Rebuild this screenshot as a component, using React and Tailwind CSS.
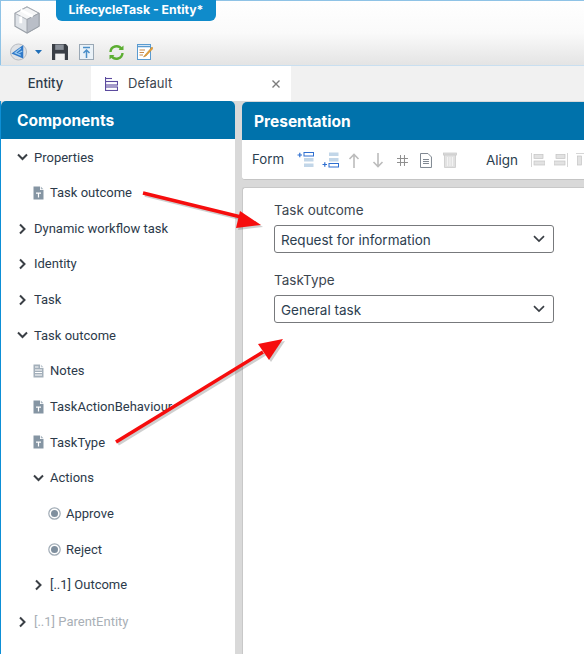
import React from "react";

function Chevron({ open, className = "" }) {
  return (
    <svg width="11" height="12" viewBox="0 0 11 12" fill="none" stroke="#3a3f45" strokeWidth="2" className={`shrink-0 ${className}`}>
      {open ? <path d="M1 3.5 L5.5 8 L10 3.5" /> : <path d="M3 1.5 L7.5 6 L3 10.5" />}
    </svg>
  );
}

function DocT() {
  return (
    <svg width="11" height="14" viewBox="0 0 11 14" className="shrink-0">
      <path d="M0.5 0.5 H7 V4 H10.5 V13.5 H0.5 Z" fill="#8595a3" />
      <path d="M7.8 0.5 L10.5 3.2 H7.8 Z" fill="#a9b5bf" />
      <path d="M3 6.5 H8 V7.7 H6.1 V11.5 H4.9 V7.7 H3 Z" fill="#fff" />
    </svg>
  );
}

function DocLines() {
  return (
    <svg width="11" height="14" viewBox="0 0 11 14" className="shrink-0">
      <path d="M0.5 0.5 H7 V4 H10.5 V13.5 H0.5 Z" fill="#a3afba" />
      <path d="M7.8 0.5 L10.5 3.2 H7.8 Z" fill="#c2cbd3" />
      <path d="M2 3 H5.5 M2 6 H9 M2 8.5 H9 M2 11 H9" stroke="#fff" strokeWidth="1" />
    </svg>
  );
}

function Radio() {
  return (
    <svg width="13" height="13" viewBox="0 0 13 13" className="shrink-0">
      <circle cx="6.5" cy="6.5" r="5.7" fill="#fff" stroke="#a0abb5" strokeWidth="1.2" />
      <circle cx="6.5" cy="6.5" r="3.5" fill="#7f8f9e" />
    </svg>
  );
}

function Row({ indent, icon, children, h = "h-[35.65px]", muted, gap = "gap-[6px]" }) {
  return (
    <div className={`flex items-center ${h} ${indent} ${gap}`}>
      {icon}
      <span
        className={`whitespace-nowrap text-[13px] ${muted ? "text-[#a9afb6]" : "text-[#2c3a4a]"}`}
        style={{ fontFamily: 'Roboto, "Liberation Sans", sans-serif' }}
      >
        {children}
      </span>
    </div>
  );
}

function StackIcon({ plusTop }) {
  return (
    <svg width="17" height="16" viewBox="0 0 17 16">
      {plusTop ? (
        <>
          <path d="M0.5 3 H5 M2.8 0.8 V5.2" stroke="#2f6fd0" strokeWidth="1.2" />
          <rect x="7" y="0.5" width="9.5" height="3.5" fill="#fff" stroke="#2f6fd0" />
          <rect x="7" y="6" width="9.5" height="3.5" fill="#c2d6e8" />
          <rect x="7" y="11.5" width="9.5" height="3.5" fill="#c2d6e8" />
        </>
      ) : (
        <>
          <path d="M0.5 12.5 H5 M2.8 10.3 V14.7" stroke="#2f6fd0" strokeWidth="1.2" />
          <rect x="7" y="0.5" width="9.5" height="3.5" fill="#c2d6e8" />
          <rect x="7" y="6" width="9.5" height="3.5" fill="#c2d6e8" />
          <rect x="7" y="11.5" width="9.5" height="3.5" fill="#fff" stroke="#2f6fd0" />
        </>
      )}
    </svg>
  );
}

function ArrowV({ up }) {
  return (
    <svg width="12" height="15" viewBox="0 0 12 15" fill="none" stroke="#bcbcbc" strokeWidth="1.6">
      {up ? <path d="M6 15 V1.5 M1.5 6 L6 1.5 L10.5 6" /> : <path d="M6 0 V13.5 M1.5 9 L6 13.5 L10.5 9" />}
    </svg>
  );
}

function Select({ label, value }) {
  return (
    <div className="flex flex-col">
      <div className="h-[22px] text-[13.5px] leading-[14px] text-[#3c4650]">{label}</div>
      <div className="flex h-[28px] w-[280px] items-center justify-between rounded-[3px] border border-[#77797c] bg-white pl-[6px] pr-[8px] text-[13.5px] text-[#2c3e50]">
        <span className="pt-[2px]">{value}</span>
        <svg width="12" height="8" viewBox="0 0 12 8" fill="none" stroke="#3a3f45" strokeWidth="1.7">
          <path d="M1 1.2 L6 6 L11 1.2" />
        </svg>
      </div>
    </div>
  );
}

export default function App() {
  return (
    <div
      className="relative h-[654px] w-[584px] overflow-hidden bg-[#d9d9d9]"
      style={{ fontFamily: 'Inter, "Liberation Sans", sans-serif' }}
    >
      {/* Title / ribbon */}
      <div className="h-[65px] border-l border-t border-[#8fc3e6] bg-gradient-to-b from-white via-[#fafafa] to-[#e4e4e4]">
        <div className="flex h-[22px] items-start">
          <div className="ml-[13px] mt-[5px] shrink-0">
            <svg width="26" height="28" viewBox="0 0 27 29">
              <path d="M13.5 1 L26 7.5 V21 L13.5 28 L1 21 V7.5 Z" fill="#dfe3e8" stroke="#9aa0a8" strokeWidth="1.2" />
              <path d="M1 7.5 L13.5 14 L26 7.5 L13.5 1 Z" fill="#f5f6f7" stroke="#a8adb4" />
              <path d="M13.5 14 V28 L26 21 V7.5 Z" fill="#b9bec7" stroke="#9aa0a8" />
              <path d="M7 4.2 L19.5 10.8 M7 10.8 V18" stroke="#fff" strokeWidth="3" fill="none" />
            </svg>
          </div>
          <div className="-mt-px ml-[16px] flex h-[21px] w-[160px] items-center justify-center rounded-b-[6px] bg-[#0f8bcb] text-[12.25px] font-bold text-white">
            LifecycleTask - Entity*
          </div>
        </div>
        <div className="ml-[9px] mt-[20px] flex h-[18px] items-center">
          <svg width="17" height="18" viewBox="0 0 18 18">
            <circle cx="9" cy="9" r="8.5" fill="#dfe2e6" stroke="#b5b9bf" />
            <path d="M14 1.5 V16 L1.5 10.5 Z" fill="#2f79c9" />
            <path d="M11.5 5 L5.5 9.8 L11.5 12.5 M13 8 L9 10" stroke="#9fcdf0" strokeWidth="1.3" fill="none" />
          </svg>
          <svg width="7" height="4" viewBox="0 0 7 4" className="ml-[8px]">
            <path d="M0 0 H7 L3.5 4 Z" fill="#1f6fb8" />
          </svg>
          <svg width="16" height="16" viewBox="0 0 15 15" className="ml-[10px]">
            <path d="M0 0 H13 L15 2 V15 H0 Z" fill="#3a3f46" />
            <rect x="3" y="0.5" width="8" height="5" fill="#8a9099" />
            <rect x="3" y="9" width="9" height="6" fill="#f2f2f2" />
          </svg>
          <svg width="15" height="16" viewBox="0 0 15 16" className="ml-[11px]">
            <rect x="0.5" y="0.5" width="14" height="15" fill="#eaf2f8" stroke="#9aa8b5" />
            <path d="M4 3.5 H11" stroke="#4a8fc9" strokeWidth="1.5" />
            <path d="M7.5 14 V6 M4.5 9 L7.5 6 L10.5 9" stroke="#4a8fc9" strokeWidth="1.5" fill="none" />
          </svg>
          <svg width="15" height="15" viewBox="0 0 15 15" className="ml-[15px]" fill="none">
            <path d="M1.5 7 A6 6 0 0 1 12.5 4" stroke="#5cae32" strokeWidth="2.4" />
            <path d="M13.5 8 A6 6 0 0 1 2.5 11" stroke="#5cae32" strokeWidth="2.4" />
            <path d="M9.5 5 H14.5 V0.5 Z M0.5 14.5 V10 H5.5 Z" fill="#5cae32" />
          </svg>
          <svg width="16" height="16" viewBox="0 0 16 16" className="ml-[13px]">
            <rect x="0.5" y="0.5" width="13" height="15" fill="#fff" stroke="#5a9bd0" />
            <path d="M0.5 2.5 H13.5" stroke="#5a9bd0" strokeWidth="1.5" />
            <path d="M2.5 6 H8 M2.5 8.5 H7 M2.5 11 H6" stroke="#c98a4a" strokeWidth="1" />
            <path d="M15 3 L8 11 L6.5 13 L9 12 L16 4.5 Z" fill="#e8a23a" stroke="#b87a20" strokeWidth="0.5" />
          </svg>
        </div>
      </div>

      {/* Tabs */}
      <div className="flex h-[36px] border-t border-[#c9dff0] bg-[#f1f1f1]">
        <div className="flex w-[91px] items-center justify-center text-[13px] font-medium text-[#2c3a4a]">Entity</div>
        <div className="flex w-[200px] items-center bg-white pl-[14px] pr-[10px]">
          <svg width="13" height="14" viewBox="0 0 13 14" fill="none" stroke="#5b4a9e" strokeWidth="1.1">
            <path d="M0.5 0 V14" />
            <path d="M0.5 1.5 H7" />
            <rect x="0.5" y="4.5" width="12" height="3.5" />
            <rect x="0.5" y="10" width="12" height="3.5" />
          </svg>
          <span className="ml-[10px] text-[13px] text-[#3c4650]">Default</span>
          <svg width="10" height="10" viewBox="0 0 10 10" className="ml-auto" stroke="#7c7c7c" strokeWidth="1.4">
            <path d="M1.5 1.5 L8.5 8.5 M8.5 1.5 L1.5 8.5" />
          </svg>
        </div>
      </div>

      {/* Panels */}
      <div className="flex h-[553px]">
        <div className="ml-px h-full w-[234px] overflow-hidden rounded-t-[5px] bg-white">
          <div className="flex h-[38px] items-center bg-[#0072ab] pl-[16px] pt-[1px] text-[15.5px] font-bold text-white">
            Components
          </div>
          <div className="pt-[0.45px]">
            <Row indent="pl-[16px]" icon={<Chevron open />}>Properties</Row>
            <Row indent="pl-[32px]" icon={<DocT />}>Task outcome</Row>
            <Row indent="pl-[16px]" icon={<Chevron />}>Dynamic workflow task</Row>
            <Row indent="pl-[16px]" icon={<Chevron />}>Identity</Row>
            <Row indent="pl-[16px]" icon={<Chevron />}>Task</Row>
            <Row indent="pl-[16px]" icon={<Chevron open />}>Task outcome</Row>
            <Row indent="pl-[32px]" icon={<DocLines />}>Notes</Row>
            <Row indent="pl-[32px]" icon={<DocT />}>TaskActionBehaviour</Row>
            <Row indent="pl-[32px]" icon={<DocT />}>TaskType</Row>
            <Row indent="pl-[32px]" icon={<Chevron open />}>Actions</Row>
            <Row indent="pl-[47px]" gap="gap-[5px]" icon={<Radio />}>Approve</Row>
            <Row indent="pl-[47px]" gap="gap-[5px]" icon={<Radio />}>Reject</Row>
            <Row indent="pl-[32px]" icon={<Chevron />}>[..1] Outcome</Row>
            <Row indent="pl-[16px]" h="h-[38.5px]" muted icon={<Chevron />}>[..1] ParentEntity</Row>
          </div>
        </div>

        <div className="ml-[7px] flex min-w-0 flex-1 flex-col">
          <div className="mt-px flex h-[38px] items-center rounded-tl-[5px] bg-[#0072ab] pl-[12px] pt-[1px] text-[15.5px] font-bold text-white">
            Presentation
          </div>
          <div className="flex h-[40px] items-center rounded-bl-[3px] border-b border-[#c4c4c4] bg-white pl-[10px] pt-[1px]">
            <span className="text-[13.25px] text-[#2c3e50]">Form</span>
            <div className="ml-[13px]"><StackIcon plusTop /></div>
            <div className="ml-[8px]"><StackIcon /></div>
            <div className="ml-[9px]"><ArrowV up /></div>
            <div className="ml-[12px]"><ArrowV /></div>
            <svg width="11" height="11" viewBox="0 0 11 11" className="ml-[13px]" stroke="#8d8d8d" strokeWidth="1">
              <path d="M3.5 0 V11 M7.5 0 V11 M0 3.5 H11 M0 7.5 H11" />
            </svg>
            <svg width="12" height="15" viewBox="0 0 12 15" className="ml-[12px]" fill="none" stroke="#7e8791" strokeWidth="1">
              <path d="M0.5 0.5 H8 L11.5 4 V14.5 H0.5 Z" />
              <path d="M3 6.5 H9 M3 8.5 H9 M3 10.5 H9" />
            </svg>
            <svg width="14" height="16" viewBox="0 0 14 16" className="ml-[11px]" fill="#e2e2e2" stroke="#c8c8c8" strokeWidth="0.8">
              <rect x="0.5" y="1" width="13" height="2" />
              <path d="M1.5 3 H12.5 V15.5 H1.5 Z" />
              <path d="M4.5 5 V14 M7 5 V14 M9.5 5 V14" stroke="#f4f4f4" strokeWidth="1" />
            </svg>
            <span className="ml-[29px] text-[13.5px] text-[#2c3e50]">Align</span>
            <svg width="14" height="14" viewBox="0 0 14 14" className="ml-[13px] shrink-0" fill="#e2e2e2" stroke="#c4c4c4" strokeWidth="0.7">
              <path d="M0.5 0 V14" />
              <rect x="3" y="1.5" width="9" height="4" />
              <rect x="3" y="8" width="11" height="4" />
            </svg>
            <svg width="14" height="14" viewBox="0 0 14 14" className="ml-[9px] shrink-0" fill="#e2e2e2" stroke="#c4c4c4" strokeWidth="0.7">
              <path d="M13.5 0 V14" />
              <rect x="2" y="1.5" width="9" height="4" />
              <rect x="0" y="8" width="11" height="4" />
            </svg>
            <svg width="8" height="14" viewBox="0 0 8 14" className="ml-[8px] shrink-0" fill="#e2e2e2" stroke="#c4c4c4" strokeWidth="0.7">
              <path d="M0 0.5 H14" />
              <rect x="1.5" y="3" width="4" height="9" />
            </svg>
          </div>
          <div className="mt-[7px] flex-1 rounded-tl-[3px] border-l border-t border-[#c8c8c8] bg-white pl-[31px] pt-[15px]">
            <div className="flex flex-col gap-[20px]">
              <Select label="Task outcome" value="Request for information" />
              <Select label="TaskType" value="General task" />
            </div>
          </div>
        </div>
      </div>

      {/* Annotation arrows */}
      <svg width="584" height="654" viewBox="0 0 584 654" className="pointer-events-none absolute left-0 top-0">
        <g opacity="0.28" transform="translate(2 2)" fill="#555" stroke="#555">
          <path d="M143 193 L245 218" strokeWidth="3.5" />
          <path d="M261 225 L236 228 L240 211 Z" stroke="none" />
          <path d="M116 442 L263 352" strokeWidth="3.5" />
          <path d="M283 339 L269 360 L258 344 Z" stroke="none" />
        </g>
        <path d="M143 193 L245 218" stroke="#f60d0d" strokeWidth="3.5" />
        <path d="M261 225 L236 228 L240 211 Z" fill="#f60d0d" />
        <path d="M116 442 L263 352" stroke="#f60d0d" strokeWidth="3.5" />
        <path d="M283 339 L269 360 L258 344 Z" fill="#f60d0d" />
      </svg>
      <div className="absolute bottom-0 left-0 top-[101px] w-px bg-[#0d8fd6]" />
    </div>
  );
}
